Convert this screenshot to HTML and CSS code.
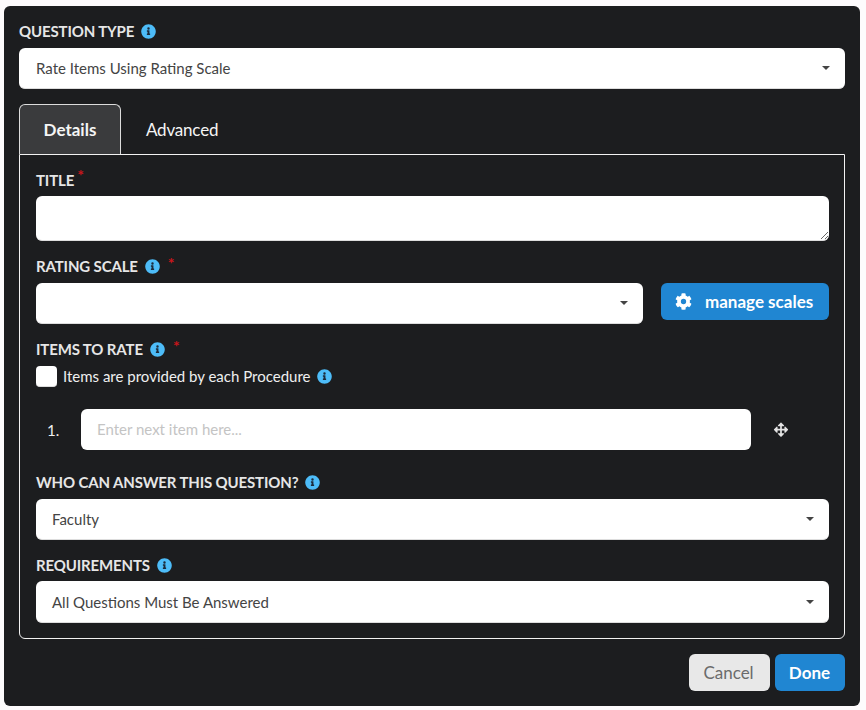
FILE: index.html
```html
<!DOCTYPE html>
<html lang="en">
<head>
<meta charset="utf-8">
<title>Question</title>
<link rel="stylesheet" href="styles.css">
</head>
<body>
<svg class="defs" width="0" height="0" aria-hidden="true">
  <symbol id="info" viewBox="0 0 512 512">
    <path fill="#4dbcf8" d="M256 8C119 8 8 119 8 256s111 248 248 248 248-111 248-248S393 8 256 8z"/>
    <path fill="#1c2a3a" d="M256 110a42 42 0 1 1 0 84 42 42 0 0 1 0-84zm56 254c0 7-5 12-12 12h-88c-7 0-12-5-12-12v-24c0-7 5-12 12-12h12v-64h-12c-7 0-12-5-12-12v-24c0-7 5-12 12-12h64c7 0 12 5 12 12v100h12c7 0 12 5 12 12z"/>
  </symbol>
</svg>
<main class="dialog">
  <div class="label-row"><span class="label">QUESTION TYPE</span><svg class="info"><use href="#info"/></svg></div>
  <div class="select top-select"><span>Rate Items Using Rating Scale</span><i class="caret"></i></div>

  <div class="tabs">
    <div class="tab active">Details</div>
    <div class="tab">Advanced</div>
  </div>

  <section class="panel">
    <div class="label-row title-label"><span class="label">TITLE</span><span class="req req-title">*</span></div>
    <textarea class="textarea"></textarea>

    <div class="label-row gap-rating"><span class="label">RATING SCALE</span><svg class="info"><use href="#info"/></svg><span class="req">*</span></div>
    <div class="scale-row">
      <div class="select grow"><span></span><i class="caret"></i></div>
      <button class="btn primary manage" type="button">
        <svg class="gear" viewBox="0 0 512 512"><path fill="#fff" d="M487 316l-42-25a190 190 0 0 0 0-70l42-25c5-3 7-8 5-14-11-35-30-67-55-93-4-4-10-5-15-2l-42 24c-18-15-38-27-60-35V28c0-6-4-10-9-12-36-8-73-8-108 0-6 2-10 6-10 12v49c-21 8-42 20-60 35L91 88c-5-3-11-2-15 2-25 26-44 58-55 93-2 6 0 11 5 14l42 25a190 190 0 0 0 0 70l-42 25c-5 3-7 8-5 14 11 35 30 67 55 93 4 4 10 5 15 2l42-24c18 15 39 27 60 35v49c0 6 4 10 10 12 36 8 72 8 108 0 5-2 9-6 9-12v-49c22-8 42-20 60-35l42 24c5 3 11 2 15-2 25-26 44-58 55-93 2-6 0-11-5-14zM256 336a80 80 0 1 1 0-160 80 80 0 0 1 0 160z"/></svg>
        <span>manage scales</span>
      </button>
    </div>

    <div class="label-row gap-items"><span class="label">ITEMS TO RATE</span><svg class="info"><use href="#info"/></svg><span class="req">*</span></div>
    <div class="check-row">
      <span class="checkbox"></span>
      <span class="check-text">Items are provided by each Procedure</span>
      <svg class="info"><use href="#info"/></svg>
    </div>

    <div class="item-row">
      <span class="item-num">1.</span>
      <input class="item-input" type="text" placeholder="Enter next item here...">
      <svg class="move" viewBox="32 32 448 448"><path fill="#e4e4e4" d="M352 320v-48h-72v72h48c14 0 22 17 11 27l-72 72c-6 6-16 6-22 0l-72-72c-10-10-3-27 11-27h48v-72h-72v48c0 14-17 22-27 11l-72-72c-6-6-6-16 0-22l72-72c10-10 27-3 27 11v48h72v-72h-48c-14 0-22-17-11-27l72-72c6-6 16-6 22 0l72 72c10 10 3 27-11 27h-48v72h72v-48c0-14 17-22 27-11l72 72c6 6 6 16 0 22l-72 72c-10 10-27 3-27-11z"/></svg>
    </div>

    <div class="label-row gap-who"><span class="label">WHO CAN ANSWER THIS QUESTION?</span><svg class="info"><use href="#info"/></svg></div>
    <div class="select"><span>Faculty</span><i class="caret"></i></div>

    <div class="label-row gap-req"><span class="label">REQUIREMENTS</span><svg class="info"><use href="#info"/></svg></div>
    <div class="select tall"><span>All Questions Must Be Answered</span><i class="caret"></i></div>
  </section>

  <footer class="actions">
    <button class="btn cancel" type="button">Cancel</button>
    <button class="btn primary done" type="button">Done</button>
  </footer>
</main>
</body>
</html>
```
FILE: styles.css
```css
* { box-sizing: border-box; }
html, body { margin: 0; height: 100%; }
body {
  background: #fdfbfc;
  font-family: Lato, "Open Sans", sans-serif;
  padding: 6px 6px 4px 4px;
  overflow: hidden;
}
.defs { position: absolute; }
.dialog {
  width: 856px;
  height: 700px;
  background: #1c1d1f;
  border-radius: 6px;
  padding: 15px;
  display: flex;
  flex-direction: column;
  color: #fff;
}
.label-row {
  display: flex;
  align-items: center;
  height: 20px;
}
.label {
  font-size: 15px;
  font-weight: 700;
  letter-spacing: -0.14px;
  color: #e6e6e6;
  line-height: 20px;
}
.info { width: 15px; height: 15px; margin-left: 7px; flex: none; }
.req {
  color: #c9151b;
  font-size: 16px;
  font-weight: 700;
  line-height: 14px;
  margin-left: 8px;
  align-self: flex-start;
}
.req-title { margin-left: 3px; margin-top: -2px; }
.select {
  height: 41px;
  background: #fff;
  border-radius: 6px;
  border-bottom: 1px solid #ddd;
  display: flex;
  align-items: center;
  justify-content: space-between;
  padding: 0 16px;
  font-size: 15px;
  color: #444;
  margin-top: 7px;
}
.top-select { padding-left: 17px; }
.select.tall { height: 42px; margin-top: 6px; }
.grow { flex: 1; margin-top: 0; }
.caret {
  width: 0;
  height: 0;
  border-left: 4.5px solid transparent;
  border-right: 4.5px solid transparent;
  border-top: 4.5px solid #444;
  margin-right: -1px;
}
.tabs { display: flex; margin-top: 15px; height: 50px; }
.tab {
  font-size: 17px;
  line-height: 52px;
  letter-spacing: -0.2px;
  text-align: center;
  color: #f5f5f5;
  margin-left: 25px;
}
.tab.active {
  width: 102px;
  margin-left: 0;
  background: #3a3b3d;
  border: 1px solid #dcdcdc;
  border-bottom: 0;
  border-radius: 6px 6px 0 0;
  font-weight: 700;
  letter-spacing: 0;
  line-height: 49px;
}
.panel {
  height: 485px;
  border: 1px solid #f2f2f2;
  border-radius: 0 0 6px 6px;
  padding: 15px 15px 0 16px;
}
.textarea {
  display: block;
  width: 100%;
  height: 45px;
  margin: 6px 0 0;
  border: 0;
  border-bottom: 1px solid #ddd;
  border-radius: 6px;
  background: #fff;
  outline: none;
}
.gap-rating { margin-top: 15px; }
.scale-row { display: flex; align-items: flex-start; gap: 18px; margin-top: 7px; }
.btn {
  border: 0;
  border-radius: 6px;
  font-family: inherit;
  font-size: 17px;
  font-weight: 700;
  height: 37px;
  padding: 0;
  color: #fff;
}
.primary { background: #2086d2; }
.manage {
  width: 168px;
  display: flex;
  align-items: center;
  padding-left: 14px;
  gap: 13px;
}
.gear { width: 17px; height: 17px; flex: none; }
.gap-items { margin-top: 15px; }
.check-row { display: flex; align-items: center; margin-top: 7px; height: 21px; }
.checkbox {
  width: 21px;
  height: 21px;
  background: #fff;
  border-radius: 4px;
  border-bottom: 1px solid #ddd;
  flex: none;
}
.check-text { font-size: 15px; color: #efefef; margin-left: 6px; padding-bottom: 2px; }
.check-row .info { margin-left: 6px; }
.item-row { display: flex; align-items: center; margin-top: 22px; height: 41px; }
.item-num { width: 45px; padding-left: 11px; font-size: 15px; color: #efefef; }
.item-input {
  width: 670px;
  height: 41px;
  border: 0;
  border-radius: 6px;
  background: #fff;
  padding: 0 16px 2px;
  font-family: inherit;
  font-size: 15px;
  outline: none;
}
.item-input::placeholder { color: #c4c4c4; opacity: 1; }
.move { width: 16px; height: 16px; margin-left: 22px; }
.gap-who { margin-top: 22px; }
.gap-req { margin-top: 15px; }
.actions { display: flex; justify-content: flex-end; gap: 5px; margin-top: 15px; }
.cancel { width: 81px; padding-right: 2px; background: #e8e8e8; color: #6b6b6b; font-weight: 400; }
.done { width: 70px; padding-right: 1px; }
```
